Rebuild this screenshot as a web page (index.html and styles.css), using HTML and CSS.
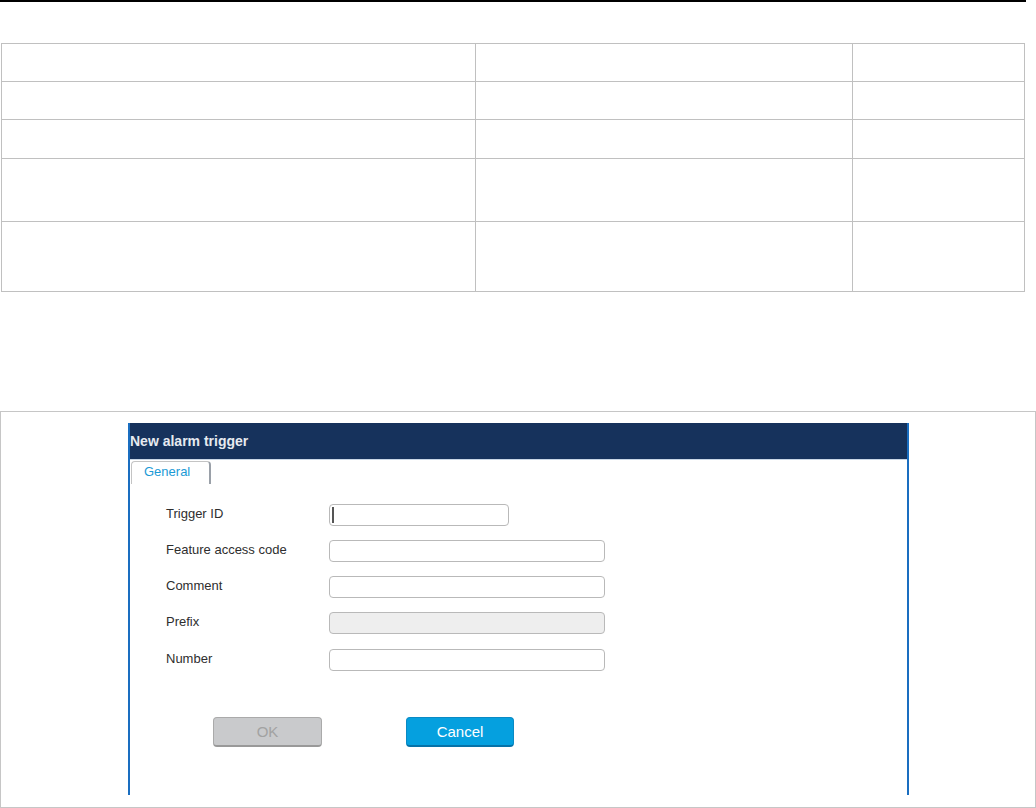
FILE: index.html
```html
<!DOCTYPE html>
<html>
<head>
<meta charset="utf-8">
<link rel="stylesheet" href="styles.css">
</head>
<body>
<div class="rule"></div>
<table class="grid">
  <tr class="r1"><td class="c1"></td><td class="c2"></td><td class="c3"></td></tr>
  <tr class="r2"><td></td><td></td><td></td></tr>
  <tr class="r3"><td></td><td></td><td></td></tr>
  <tr class="r4"><td></td><td></td><td></td></tr>
  <tr class="r5"><td></td><td></td><td></td></tr>
</table>
<div class="frame">
  <div class="dialog">
    <div class="titlebar">New alarm trigger</div>
    <div class="tabs"><div class="tab">General</div></div>
    <div class="form">
      <div class="row"><span class="label">Trigger ID</span><div class="field short"><span class="caret"></span></div></div>
      <div class="row"><span class="label">Feature access code</span><div class="field"></div></div>
      <div class="row"><span class="label">Comment</span><div class="field"></div></div>
      <div class="row"><span class="label">Prefix</span><div class="field disabled"></div></div>
      <div class="row"><span class="label">Number</span><div class="field"></div></div>
    </div>
    <div class="buttons">
      <div class="btn ok">OK</div>
      <div class="btn cancel">Cancel</div>
    </div>
  </div>
</div>
</body>
</html>
```
FILE: styles.css
```css
html, body { margin: 0; padding: 0; background: #fff; }
body { font-family: "Liberation Sans", Arial, sans-serif; width: 1036px; height: 808px; overflow: hidden; }
.rule { width: 1026px; height: 2px; background: #000; }
.grid {
  border-collapse: collapse;
  margin: 41px 0 0 1px;
  width: 1024px;
}
.grid td { border: 1px solid #c0c0c0; padding: 0; }
.grid .c1 { width: 473px; }
.grid .c2 { width: 376px; }
.grid .c3 { width: 171px; }
.r1 td { height: 37px; }
.r2 td { height: 37px; }
.r3 td { height: 38px; }
.r4 td { height: 62px; }
.r5 td { height: 69px; }
.frame {
  margin-top: 119px;
  width: 1036px;
  height: 397px;
  border: 1px solid #c6c6c6;
  box-sizing: border-box;
  padding: 11px 0 0 127px;
}
.dialog {
  width: 781px;
  height: 372px;
  box-sizing: border-box;
  border-left: 2px solid #1a6ec0;
  border-right: 2px solid #1a6ec0;
  display: flex;
  flex-direction: column;
}
.titlebar {
  height: 36px;
  background: #16325c;
  color: #e6eaf0;
  font-weight: bold;
  font-size: 14px;
  line-height: 36px;
  border-bottom: 1px solid #c9d6e6;
}
.tabs { display: flex; padding-left: 1px; padding-top: 1px; }
.tab {
  width: 80px;
  height: 23px;
  border: 1px solid #c4c4c4;
  border-right: 2px solid #9aa0a8;
  border-bottom: none;
  border-radius: 4px 4px 0 0;
  color: #1b9ad6;
  font-size: 13px;
  line-height: 20px;
  padding-left: 12px;
  box-sizing: border-box;
}
.form {
  padding: 20px 0 0 36px;
  display: flex;
  flex-direction: column;
  gap: 14px;
}
.row { display: flex; align-items: center; height: 22px; }
.row:last-child { margin-top: 1px; }
.label { width: 163px; font-size: 13px; color: #2e2e2e; margin-top: -3px; }
.field {
  width: 276px;
  height: 22px;
  box-sizing: border-box;
  border: 1px solid #b9b9b9;
  border-radius: 4px;
  background: #fff;
  position: relative;
}
.field.short { width: 180px; }
.field.disabled { background: #eeeeee; }
.caret {
  position: absolute;
  left: 2px;
  top: 2px;
  width: 2px;
  height: 16px;
  background: #555;
}
.buttons {
  display: flex;
  gap: 84px;
  padding: 46px 0 0 83px;
}
.btn {
  width: 109px;
  height: 30px;
  box-sizing: border-box;
  border-radius: 4px;
  font-size: 15px;
  text-align: center;
  line-height: 27px;
}
.ok {
  background: #c9cacc;
  border: 1px solid #aaaaaa;
  border-bottom: 2px solid #999;
  color: #a2a2a2;
}
.cancel {
  width: 108px;
  background: #05a0df;
  border: 1px solid #0a8ac4;
  border-bottom: 2px solid #0672a8;
  color: #ffffff;
}
```
